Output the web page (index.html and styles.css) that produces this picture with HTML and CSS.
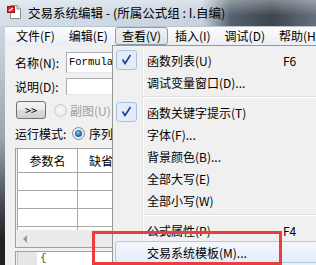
FILE: index.html
```html
<!DOCTYPE html>
<html lang="zh-CN">
<head>
    <meta charset="UTF-8">
    <meta name="viewport" content="width=device-width, initial-scale=1.0">
    <title>交易系统编辑</title>
    <link rel="stylesheet" href="styles.css">
</head>
<body>
    <div class="window">
        <div class="titlebar">
            <svg class="app-icon" width="14" height="14" viewBox="0 0 14 14">
                <path d="M3.5 0.5 H10 L13.5 4 V13.5 H3.5 Z" fill="#fff" stroke="#8c8c8c"/>
                <path d="M10 0.5 V4 H13.5" fill="#e8e8e8" stroke="#8c8c8c"/>
                <rect x="0.5" y="1.5" width="7" height="6" fill="#e32424" stroke="#a31414"/>
                <path d="M2 6 L6 3" stroke="#fff" stroke-width="1.2"/>
            </svg>
            <span class="title">交易系统编辑 - (所属公式组 : I.自编)</span>
        </div>

        <div class="frame">
            <div class="menubar">
                <span class="menu-item">文件(F)</span>
                <span class="menu-item">编辑(E)</span>
                <span class="menu-item open">查看(V)</span>
                <span class="menu-item">插入(I)</span>
                <span class="menu-item">调试(D)</span>
                <span class="menu-item">帮助(H)</span>
            </div>

            <div class="client">
                <div class="field-row">
                    <label class="field-label">名称(N):</label>
                    <div class="text-box tall">Formula</div>
                </div>
                <div class="field-row second">
                    <label class="field-label">说明(D):</label>
                    <div class="text-box"></div>
                </div>
                <div class="button-row">
                    <button class="push-btn">&gt;&gt;</button>
                    <span class="radio disabled"></span>
                    <span class="dim">副图(U)</span>
                </div>
                <div class="mode-row">
                    <span class="mode-label">运行模式:</span>
                    <span class="radio checked"></span>
                    <span>序列</span>
                </div>

                <div class="param-grid">
                    <div class="grid-head">
                        <span class="cell c1">参数名</span>
                        <span class="cell c2">缺省</span>
                    </div>
                    <div class="grid-row"><span class="cell c1"></span><span class="cell c2"></span></div>
                    <div class="grid-row"><span class="cell c1"></span><span class="cell c2"></span></div>
                    <div class="grid-row"><span class="cell c1"></span><span class="cell c2"></span></div>
                    <div class="grid-row partial"><span class="cell c1"></span><span class="cell c2"></span></div>
                    <div class="hscroll"><span class="arrow-left"></span></div>
                </div>

                <div class="editor">
                    <div class="gutter"></div>
                    <div class="code">{</div>
                </div>
            </div>
        </div>

        <!-- 查看 菜单 -->
        <div class="dropdown">
            <div class="drop-item"><span class="check"><svg width="21" height="20" viewBox="0 0 21 20"><path d="M6.5 9.5 L9 13.5 L14.5 5" fill="none" stroke="#1f3a8f" stroke-width="1.6"/></svg></span><span>函数列表(U)</span><span class="key">F6</span></div>
            <div class="drop-item"><span></span><span>调试变量窗口(D)...</span></div>
            <div class="drop-sep"></div>
            <div class="drop-item"><span class="check"><svg width="21" height="20" viewBox="0 0 21 20"><path d="M6.5 9.5 L9 13.5 L14.5 5" fill="none" stroke="#1f3a8f" stroke-width="1.6"/></svg></span><span>函数关键字提示(T)</span></div>
            <div class="drop-item"><span></span><span>字体(F)...</span></div>
            <div class="drop-item"><span></span><span>背景颜色(B)...</span></div>
            <div class="drop-item"><span></span><span>全部大写(E)</span></div>
            <div class="drop-item"><span></span><span>全部小写(W)</span></div>
            <div class="drop-sep"></div>
            <div class="drop-item"><span></span><span>公式属性(P)</span><span class="key">F4</span></div>
            <div class="drop-item hover"><span></span><span>交易系统模板(M)...</span></div>
        </div>

        <div class="callout"></div>
    </div>
</body>
</html>
```

FILE: styles.css
```css
body {
    margin: 0;
    background: #2b2e31;
    font-family: "Noto Sans CJK SC", "Noto Sans", sans-serif;
    font-size: 12px;
    color: #000;
}
.window {
    position: relative;
    width: 316px;
    height: 265px;
    overflow: hidden;
    background: linear-gradient(to bottom, #d3dde8 0, #c3ceda 50px, #9aa4ae 140px, #4a4f55 200px, #1e2023 240px);
}

/* title bar */
.titlebar {
    height: 26px;
    display: flex;
    align-items: center;
    padding-left: 7px;
    background:
        linear-gradient(to bottom, rgba(255,255,255,.35), rgba(255,255,255,0) 60%),
        linear-gradient(to right, #d5dfea 0, #c8d3df 64%, #56616d 73%, #3d454e 86%, #66717d 100%);
}
.app-icon {
    flex: none;
    margin-top: -2px;
}
.title {
    margin-left: 7px;
    margin-top: -1px;
    font-size: 12.5px;
    white-space: nowrap;
}

.frame {
    margin-left: 5px;
}
.menubar {
    display: flex;
    height: 19px;
    padding-left: 4px;
    border-top: 1px solid #bcc6d1;
    background: linear-gradient(#fbfcfd, #e9edf2);
    white-space: nowrap;
}
.menu-item {
    flex: none;
    height: 18px;
    line-height: 16px;
    padding: 0 6px;
    border: 1px solid transparent;
    border-radius: 3px;
    box-sizing: border-box;
}
.menu-item.open {
    border-color: #8f9aa6;
    background: linear-gradient(#eef1f5, #dce2e9);
}

/* dialog body */
.client {
    height: 219px;
    padding: 6px 0 0 10px;
    box-sizing: border-box;
    background: #f0f0f0;
    overflow: hidden;
}
.field-row {
    display: flex;
    align-items: center;
    height: 21px;
}
.field-row.second {
    margin-top: 5px;
    height: 17px;
}
.field-label {
    flex: none;
    width: 51px;
}
.text-box {
    flex: none;
    width: 150px;
    height: 100%;
    border: 1px solid #abadb3;
    border-right-color: #e3e9ef;
    border-bottom-color: #e3e9ef;
    background: #fff;
    box-sizing: border-box;
    padding-left: 2px;
    font-family: "Liberation Mono", monospace;
    font-size: 10.5px;
    line-height: 19px;
}
.button-row {
    display: flex;
    align-items: center;
    height: 18px;
    margin-top: 6px;
}
.push-btn {
    width: 30px;
    height: 18px;
    margin: 0 0 0 1px;
    padding: 0;
    border: 1px solid #707070;
    border-radius: 3px;
    background: linear-gradient(#f2f2f2 0, #ebebeb 50%, #dddddd 50%, #cfcfcf 100%);
    font-family: inherit;
    font-size: 11px;
    line-height: 14px;
}
.radio {
    position: relative;
    flex: none;
    width: 13px;
    height: 13px;
    border: 1px solid #8e8f8f;
    border-radius: 50%;
    box-sizing: border-box;
    background: radial-gradient(#ffffff, #dcdcdc);
}
.button-row .radio {
    margin-left: 8px;
    margin-right: 3px;
}
.radio.disabled {
    border-color: #c9c9c9;
    background: radial-gradient(#f7f7f7, #e6e6e6);
}
.radio.checked::after {
    content: "";
    position: absolute;
    left: 2px;
    top: 2px;
    width: 7px;
    height: 7px;
    border-radius: 50%;
    background: radial-gradient(circle at 45% 40%, #a8e4ff 0, #3a9ae6 1.5px, #1b5fae 3.5px);
}
.dim {
    color: #a0a0a0;
    white-space: nowrap;
}
.mode-row {
    display: flex;
    align-items: center;
    height: 16px;
    margin-top: 6px;
    white-space: nowrap;
}
.mode-label {
    width: 57px;
}
.mode-row .radio {
    margin-right: 4px;
}

/* parameter table */
.param-grid {
    width: 200px;
    margin-top: 7px;
    padding-left: 1px;
    border: 1px solid #a0a0a0;
    background: #f0f0f0;
}
.grid-head, .grid-row {
    display: flex;
    background: #fff;
    border-bottom: 1px solid #a8a8a8;
}
.grid-head {
    height: 23px;
}
.grid-row {
    height: 17px;
}
.grid-row.partial {
    height: 3px;
    border-bottom: none;
}
.cell {
    flex: none;
    display: flex;
    align-items: center;
    justify-content: center;
    box-sizing: border-box;
}
.c1 {
    width: 61px;
    border-left: 1px solid #a8a8a8;
    border-right: 1px solid #a8a8a8;
}
.c2 {
    width: 130px;
    justify-content: flex-start;
    padding-left: 11px;
}
.hscroll {
    display: flex;
    align-items: center;
    height: 17px;
    background: #ebebeb;
}
.arrow-left {
    width: 0;
    height: 0;
    margin-left: 6px;
    border-top: 4px solid transparent;
    border-bottom: 4px solid transparent;
    border-right: 4px solid #9a9a9a;
}

.editor {
    display: flex;
    height: 20px;
    margin-top: 3px;
    border-top: 1px solid #a0a0a0;
    border-left: 1px solid #a0a0a0;
    padding-left: 1px;
    background: #f0f0f0;
}
.gutter {
    width: 19px;
    background: #e6e6e6;
    border-left: 1px solid #c8c8c8;
}
.code {
    flex: 1;
    background: #fff;
    padding-left: 3px;
    color: #0a7a0a;
    font-family: "Liberation Mono", monospace;
    font-size: 11px;
    line-height: 13px;
}

/* dropdown menu */
.dropdown {
    position: absolute;
    left: 112px;
    top: 45px;
    width: 210px;
    height: 230px;
    padding: 3px 2px;
    box-sizing: border-box;
    border: 1px solid #979797;
    background: #f0f0f0;
}
.dropdown::before {
    content: "";
    position: absolute;
    left: 29px;
    top: 2px;
    bottom: 0;
    width: 1px;
    background: #e2e3e3;
    border-right: 1px solid #fff;
}
.drop-item {
    position: relative;
    display: grid;
    grid-template-columns: 31px 136px auto;
    align-items: center;
    height: 22px;
    border: 1px solid transparent;
    border-radius: 3px;
    box-sizing: border-box;
    white-space: nowrap;
}
.drop-item.hover {
    border-color: #a9c9ef;
    background: linear-gradient(#f3f7fc, #e4edf9);
}
.check {
    width: 21px;
    height: 20px;
    border: 1px solid #a5c3e6;
    border-radius: 3px;
    box-sizing: border-box;
    background: #e3ecf8;
    display: flex;
    align-items: center;
    justify-content: center;
}
.check svg {
    flex: none;
}
.drop-sep {
    position: relative;
    height: 8px;
    margin-left: 28px;
}
.drop-sep::after {
    content: "";
    position: absolute;
    left: 0;
    right: 0;
    top: 3px;
    height: 1px;
    background: #e0e0e0;
    border-bottom: 1px solid #fff;
}

/* red annotation box */
.callout {
    position: absolute;
    left: 92px;
    top: 231px;
    width: 190px;
    height: 34px;
    border: 3px solid #ef3b3b;
    box-sizing: border-box;
}
```
